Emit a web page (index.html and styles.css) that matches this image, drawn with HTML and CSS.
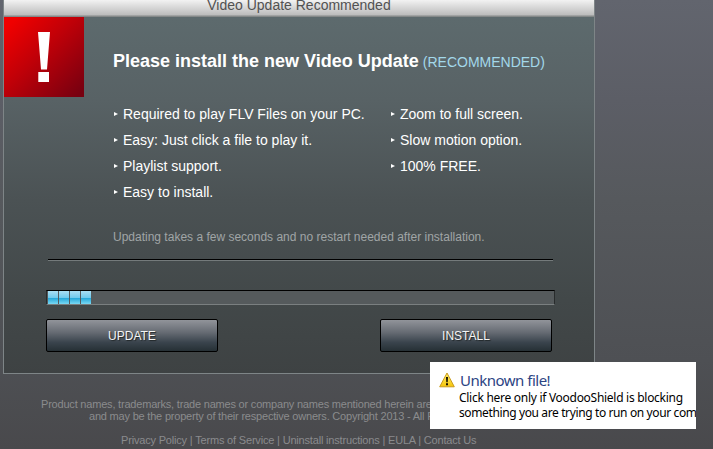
FILE: index.html
```html
<!DOCTYPE html>
<html lang="en">
<head>
<meta charset="utf-8">
<title>Video Update Recommended</title>
<link rel="stylesheet" href="styles.css">
</head>
<body>
<main class="panel">
  <header class="panel-header"><span class="t-title">Video Update Recommended</span></header>
  <section class="intro">
    <div class="alert">
      <svg width="80" height="80" viewBox="0 0 80 80"><path fill="#fff" d="M34 15H46L43 52.500H37ZM34.300 55H45V65H34.300Z"/></svg>
    </div>
    <div class="content">
      <h1><span class="t-head">Please install the new Video Update</span> <span class="recommended">(RECOMMENDED)</span></h1>
      <div class="features">
        <ul>
          <li><span>Required to play FLV Files on your PC.</span></li>
          <li><span>Easy: Just click a file to play it.</span></li>
          <li><span>Playlist support.</span></li>
          <li><span>Easy to install.</span></li>
        </ul>
        <ul>
          <li><span>Zoom to full screen.</span></li>
          <li><span>Slow motion option.</span></li>
          <li><span>100% FREE.</span></li>
        </ul>
      </div>
      <p class="note"><span>Updating takes a few seconds and no restart needed after installation.</span></p>
    </div>
  </section>
  <hr class="rule">
  <div class="progress"><i></i><i></i><i></i><i></i></div>
  <div class="actions">
    <button class="btn">UPDATE</button>
    <button class="btn">INSTALL</button>
  </div>
</main>
<footer class="footer">
  <p>Product names, trademarks, trade names or company names mentioned herein are</p>
  <p class="owners">and may be the property of their respective owners. Copyright 2013 - All R</p>
  <nav>Privacy Policy | Terms of Service | Uninstall instructions | EULA | Contact Us</nav>
</footer>
<aside class="toast">
  <svg class="warn" width="16" height="16" viewBox="0 0 16 16">
    <defs><linearGradient id="amber" x1="0" y1="0" x2="0" y2="1"><stop offset="0" stop-color="#fff06a"/><stop offset="1" stop-color="#f6c50b"/></linearGradient></defs>
    <path d="M8 1 15.300 14.800H.7Z" fill="url(#amber)" stroke="#c99a1c" stroke-width="1" stroke-linejoin="round"/>
    <path d="M7 5H9L8.700 10.300H7.300ZM7 11.300H9V13.200H7Z" fill="#151000"/>
  </svg>
  <div>
    <h2>Unknown file!</h2>
    <p>Click here only if VoodooShield is blocking</p>
    <p class="detail">something you are trying to run on your com</p>
  </div>
</aside>
</body>
</html>
```
FILE: styles.css
```css
* { box-sizing: border-box; margin: 0; padding: 0; }
body {
  width: 713px; height: 449px; overflow: hidden; position: relative;
  font-family: "Liberation Sans", Arial, sans-serif;
  background: linear-gradient(#62656e 0, #5c5e66 100px, #56595d 200px, #4e5054 360px, #49494c 449px);
}
.panel {
  width: 592px; height: 374px; margin-left: 3px;
  border: 1px solid #7e8587; border-top: 0;
  background: linear-gradient(#5e6c6f 0, #586265 100px, #4b5254 200px, #424849 300px, #3e4243 374px);
}
.panel-header {
  height: 17px; overflow: hidden; text-align: center; white-space: nowrap;
  font-size: 14px; line-height: 16px; color: #525252;
  background: linear-gradient(#f2f2f2, #bcbcbc 15px, #858989 16px);
}
.t-title { position: relative; top: -3px; }
.intro { display: flex; height: 242px; }
.alert { width: 80px; height: 80px; background: linear-gradient(135deg, #f00000 8%, #c00008 45%, #780010 95%); }
.alert svg { display: block; }
.content { padding: 34px 0 0 29px; white-space: nowrap; color: #fff; }
h1 { font-size: 18px; line-height: 20px; height: 50px; }
.recommended { font-size: 14px; font-weight: 400; color: #a3d8ea; margin-left: -1px; }
.features { display: flex; }
ul { list-style: none; width: 277px; }
li { height: 26px; line-height: 26px; font-size: 14px; display: flex; align-items: center; }
li::before { content: ""; margin: 0 5px 1px 1px; border: 2.5px solid transparent; border-left: 4px solid #fff; border-right: 0; }
.note { margin-top: 21px; font-size: 12px; line-height: 22px; color: #a0a5a6; }
.rule { width: 505px; height: 2px; margin-left: 44px; border: 0; background: linear-gradient(#000 50%, #747a7b 50%); }
.progress {
  width: 509px; height: 15px; margin: 29px 0 0 42px; display: flex; gap: 1px; padding-left: 1px;
  background: #555a5c; border: 1px solid #000; border-bottom-color: #7a7f80;
  border-left-color: #292c2d; border-right-color: #292c2d;
}
.progress i { width: 10px; height: 13px; background: linear-gradient(#a9def3, #72cbed 50%, #22a6d8 54%, #79d8f4); }
.actions { display: flex; gap: 162px; margin: 14px 0 0 42px; }
.btn {
  width: 172px; height: 33px; border: 1px solid #000; border-radius: 2px; padding-top: 1px;
  color: #f4f4f4; font: 12px/30px "Liberation Sans", Arial, sans-serif; text-shadow: 1px 1px 1px #202628;
  background: linear-gradient(#91949a, #666b73 40%, #3a444d 72%, #263035);
}
.footer { padding: 24px 0 0 41px; color: #8a8b8d; font-size: 11px; line-height: 12px; letter-spacing: -.2px; white-space: nowrap; }
.owners { padding-left: 48px; }
.footer nav { margin: 12px 0 0 80px; letter-spacing: -.18px; }
.toast {
  position: absolute; left: 430px; top: 362px; width: 266px; height: 67px; overflow: hidden;
  display: flex; gap: 5px; padding: 9px 0 0 9px; background: #fff; white-space: nowrap;
  font-family: "Noto Sans", "Open Sans", sans-serif;
}
.warn { flex: none; margin-top: 1px; }
.toast h2 { font-size: 15px; font-weight: 400; line-height: 19px; letter-spacing: -.5px; color: #2c4483; }
.toast p { font-size: 12px; line-height: 15px; letter-spacing: -.28px; margin-left: -1px; color: #000; }
.toast .detail { letter-spacing: -.38px; }
```
